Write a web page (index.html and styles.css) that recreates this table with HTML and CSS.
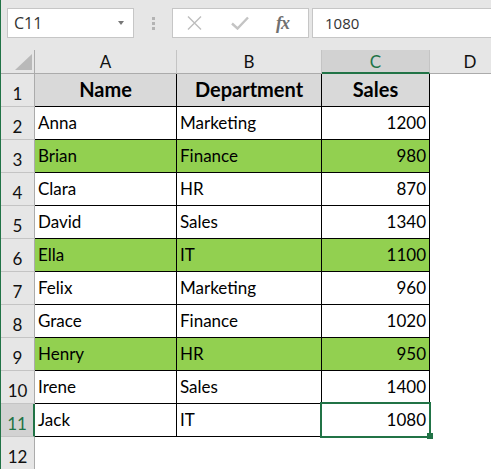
FILE: index.html
```html
<!DOCTYPE html>
<html>
<head>
<meta charset="utf-8">
<link rel="stylesheet" href="styles.css">
</head>
<body>
<div class="app">
  <div class="toolbar">
    <div class="namebox"><span class="nb-text">C11</span><span class="nb-arrow"></span></div>
    <div class="grip"><i></i><i></i><i></i></div>
    <div class="fbtns">
      <svg class="ic-x" width="15" height="14" viewBox="0 0 15 14"><path d="M1 0.5 L14 13.5 M14 0.5 L1 13.5" stroke="#bdbdbd" stroke-width="1.4" fill="none"/></svg>
      <svg class="ic-ok" width="18" height="14" viewBox="0 0 18 14"><path d="M1 7.5 L6.5 12.5 L17 1.5" stroke="#c4c4c4" stroke-width="2.4" fill="none"/></svg>
      <span class="fx">fx</span>
    </div>
    <div class="fbar">1080</div>
  </div>
  <div class="sheet">
    <div class="corner"><svg width="17" height="16" viewBox="0 0 17 16"><polygon points="17,0 17,16 0,16" fill="#b9b9b9"/></svg></div>
    <div class="ch">A</div>
    <div class="ch">B</div>
    <div class="ch sel">C</div>
    <div class="ch last">D</div>

    <div class="rh">1</div>
    <div class="c hd">Name</div>
    <div class="c hd">Department</div>
    <div class="c hd">Sales</div>
    <div class="e"></div>

    <div class="rh">2</div>
    <div class="c">Anna</div>
    <div class="c">Marketing</div>
    <div class="c num">1200</div>
    <div class="e"></div>

    <div class="rh">3</div>
    <div class="c g">Brian</div>
    <div class="c g">Finance</div>
    <div class="c g num">980</div>
    <div class="e"></div>

    <div class="rh">4</div>
    <div class="c">Clara</div>
    <div class="c">HR</div>
    <div class="c num">870</div>
    <div class="e"></div>

    <div class="rh">5</div>
    <div class="c">David</div>
    <div class="c">Sales</div>
    <div class="c num">1340</div>
    <div class="e"></div>

    <div class="rh">6</div>
    <div class="c g">Ella</div>
    <div class="c g">IT</div>
    <div class="c g num">1100</div>
    <div class="e"></div>

    <div class="rh">7</div>
    <div class="c">Felix</div>
    <div class="c">Marketing</div>
    <div class="c num">960</div>
    <div class="e"></div>

    <div class="rh">8</div>
    <div class="c">Grace</div>
    <div class="c">Finance</div>
    <div class="c num">1020</div>
    <div class="e"></div>

    <div class="rh">9</div>
    <div class="c g">Henry</div>
    <div class="c g">HR</div>
    <div class="c g num">950</div>
    <div class="e"></div>

    <div class="rh">10</div>
    <div class="c">Irene</div>
    <div class="c">Sales</div>
    <div class="c num">1400</div>
    <div class="e"></div>

    <div class="rh sel">11</div>
    <div class="c">Jack</div>
    <div class="c">IT</div>
    <div class="c num active">1080<span class="selbox"></span><span class="handle"></span></div>
    <div class="e"></div>

    <div class="rh">12</div>
    <div class="e"></div>
    <div class="e"></div>
    <div class="e"></div>
    <div class="e"></div>
  </div>
</div>
</body>
</html>
```
FILE: styles.css
```css
html, body {
  margin: 0;
  padding: 0;
  background: #ffffff;
}
body {
  width: 491px;
  height: 469px;
  overflow: hidden;
}
.app {
  width: 490px;
  height: 469px;
  border-left: 1px solid #217346;
  overflow: hidden;
  font-family: Lato, "Liberation Sans", sans-serif;
}
.toolbar {
  height: 50px;
  box-sizing: border-box;
  background: #e6e6e6;
  display: flex;
  align-items: flex-start;
  padding: 8px 0 0 6px;
}
.namebox {
  width: 127px;
  height: 30px;
  box-sizing: border-box;
  border: 1px solid #c6c6c6;
  background: #fff;
  display: flex;
  align-items: center;
  justify-content: space-between;
  padding: 0 9px 0 6px;
  flex: none;
}
.nb-text, .fbar {
  font-family: "Open Sans", "Noto Sans", sans-serif;
  font-size: 15px;
  color: #333;
}
.nb-text { font-size: 16px; }
.nb-arrow {
  width: 0;
  height: 0;
  border-left: 3.5px solid transparent;
  border-right: 3.5px solid transparent;
  border-top: 4px solid #777;
}
.grip {
  width: 38px;
  height: 30px;
  flex: none;
  display: flex;
  flex-direction: column;
  align-items: center;
  justify-content: center;
  gap: 2px;
}
.grip i {
  display: block;
  width: 3px;
  height: 3px;
  background: #b3b3b3;
}
.fbtns {
  width: 137px;
  height: 30px;
  box-sizing: border-box;
  border: 1px solid #c6c6c6;
  background: #fff;
  flex: none;
  display: flex;
  align-items: center;
  padding-left: 14px;
}
.ic-x { margin-right: 29px; }
.ic-ok { margin-right: 27px; }
.fx {
  font-family: "Liberation Serif", serif;
  font-style: italic;
  font-weight: bold;
  font-size: 18px;
  color: #707070;
  letter-spacing: -1px;
}
.fbar {
  margin-left: 3px;
  flex: 1;
  height: 30px;
  box-sizing: border-box;
  border: 1px solid #c6c6c6;
  border-right: none;
  background: #fff;
  display: flex;
  align-items: center;
  padding-left: 12px;
}
.sheet {
  display: grid;
  grid-template-columns: 34px 142px 145px 108px 80px;
  grid-template-rows: 24px repeat(12, 33px);
}
.sheet > div {
  box-sizing: border-box;
}
.corner {
  background: #e6e6e6;
  border-right: 1px solid #ababab;
  border-bottom: 1px solid #ababab;
  display: flex;
  align-items: flex-end;
  justify-content: flex-end;
  padding: 0 2px 3px 0;
}
.corner svg { display: block; }
.ch {
  background: #e6e6e6;
  border-right: 1px solid #c4c4c4;
  border-bottom: 1px solid #ababab;
  font-size: 17px;
  line-height: 20px;
  color: #111;
  display: flex;
  align-items: flex-end;
  justify-content: center;
  padding-bottom: 1px;
}
.ch.sel {
  background: #d2d2d2;
  color: #217346;
  border-bottom: 2px solid #217346;
  padding-bottom: 0;
}
.ch.last { border-right: none; }
.rh {
  background: #e6e6e6;
  border-right: 1px solid #ababab;
  border-bottom: 1px solid #c4c4c4;
  font-size: 17px;
  line-height: 20px;
  color: #111;
  display: flex;
  align-items: flex-end;
  justify-content: center;
  padding-bottom: 2px;
}
.rh.sel {
  background: #d2d2d2;
  color: #217346;
  border-right: 2px solid #217346;
}
.c {
  border-right: 1px solid #000;
  border-bottom: 1px solid #000;
  font-size: 17px;
  line-height: 20px;
  color: #000;
  display: flex;
  align-items: flex-end;
  padding: 0 3px 6px 3px;
  white-space: nowrap;
}
.c.hd {
  background: #d9d9d9;
  font-weight: bold;
  font-size: 20px;
  justify-content: center;
  padding-bottom: 7px;
}
.c.g { background: #92d050; }
.c.num { justify-content: flex-end; }
.c.active { position: relative; }
.selbox {
  position: absolute;
  top: -2px;
  left: -2px;
  right: -2px;
  bottom: -2px;
  border: 2px solid #217346;
}
.handle {
  position: absolute;
  right: -4px;
  bottom: -3px;
  width: 6px;
  height: 6px;
  background: #217346;
}
.e { background: #fff; }
```
